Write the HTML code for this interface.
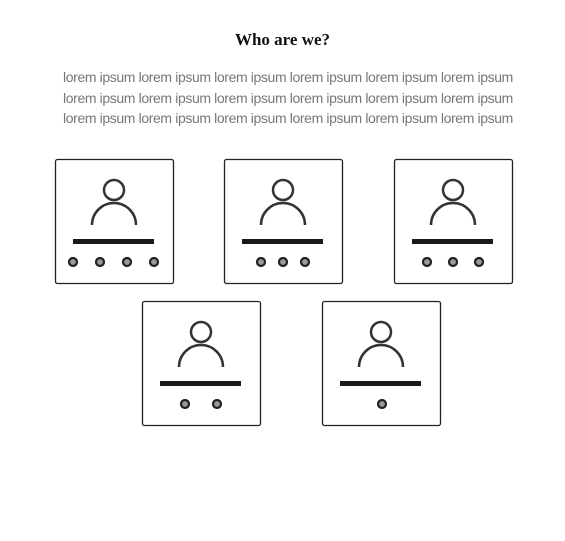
<!DOCTYPE html>
<html><head><style>
body{margin:0;width:565px;height:541px;background:#fff;position:relative;overflow:hidden}
h1{position:absolute;top:30px;left:0;width:565px;text-align:center;margin:0;font:bold 17px "Liberation Serif",serif;color:#111}
p{position:absolute;top:67px;left:48px;width:480px;margin:0;text-align:center;font:14px/20.5px "Liberation Sans",sans-serif;color:#777;letter-spacing:-0.38px}
svg{position:absolute}
</style></head><body>
<h1>Who are we?</h1>
<p>lorem ipsum lorem ipsum lorem ipsum lorem ipsum lorem ipsum lorem ipsum<br>lorem ipsum lorem ipsum lorem ipsum lorem ipsum lorem ipsum lorem ipsum<br>lorem ipsum lorem ipsum lorem ipsum lorem ipsum lorem ipsum lorem ipsum</p>
<svg width="565" height="541" style="left:0;top:0">
<defs>
<g id="c">
<rect x="0.5" y="0.5" width="118" height="124" rx="2" fill="#fff" stroke="#222" stroke-width="1.3"/>
<circle cx="59" cy="31" r="10" fill="none" stroke="#333" stroke-width="2.5"/>
<path d="M37 66 A22 22 0 0 1 81 66" fill="none" stroke="#333" stroke-width="2.5"/>
<rect x="18" y="80" width="81" height="5" fill="#1a1a1a"/>
</g>
<g id="d"><circle r="4" fill="#999" stroke="#222" stroke-width="2.2"/></g>
</defs>
<g transform="translate(55,159)"><use href="#c"/><use href="#d" x="18" y="103"/><use href="#d" x="45" y="103"/><use href="#d" x="72" y="103"/><use href="#d" x="99" y="103"/></g>
<g transform="translate(224,159)"><use href="#c"/><use href="#d" x="37" y="103"/><use href="#d" x="59" y="103"/><use href="#d" x="81" y="103"/></g>
<g transform="translate(394,159)"><use href="#c"/><use href="#d" x="33" y="103"/><use href="#d" x="59" y="103"/><use href="#d" x="85" y="103"/></g>
<g transform="translate(142,301)"><use href="#c"/><use href="#d" x="43" y="103"/><use href="#d" x="75" y="103"/></g>
<g transform="translate(322,301)"><use href="#c"/><use href="#d" x="60" y="103"/></g>
</svg>
</body></html>
